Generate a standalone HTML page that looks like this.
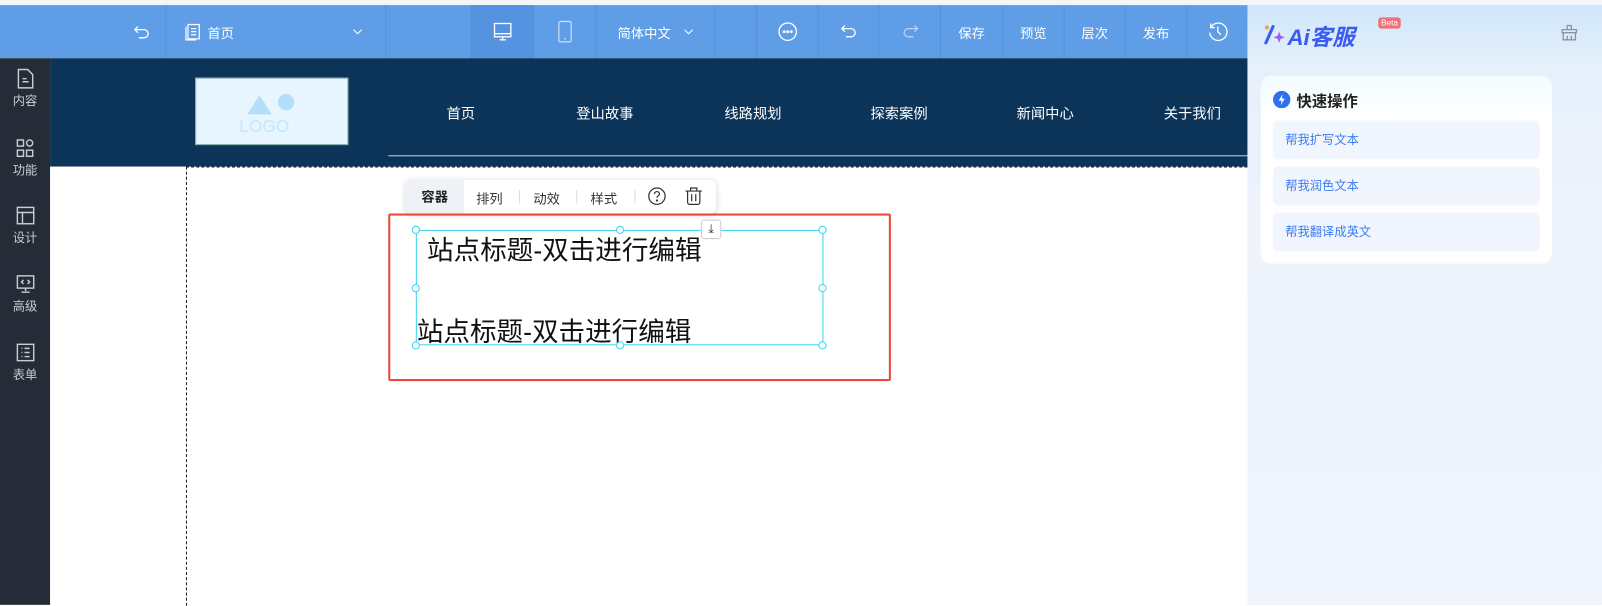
<!DOCTYPE html>
<html><head><meta charset="utf-8"><style>
*{margin:0;padding:0;box-sizing:border-box}
html,body{width:1602px;height:605px;overflow:hidden;background:#fff}
body{font-family:"Liberation Sans","Noto Sans CJK SC",sans-serif}
#w{position:absolute;left:0;top:0;width:1568px;height:592px;transform:scale(1.02168);transform-origin:0 0}
.abs{position:absolute}
.top{left:0;top:0;width:1568px;height:5px;background:#f4f5f9}
.tb{left:0;top:5px;width:1221px;height:52px;background:#5f9de7;color:#fff;font-size:13px}
.tb .c{position:absolute;top:0;height:52px;display:flex;align-items:center;justify-content:center;border-left:1px solid #5592dc}
.side{left:0;top:57px;width:49px;height:535px;background:#252c38;color:#c8ccd4;font-size:12px}
.side .it{position:absolute;left:0;width:49px;text-align:center}
.nav{left:49px;top:57px;width:1172px;height:106px;background:#0c3459}
.nav span{position:absolute;top:44px;color:#fff;font-size:14px}
.panel{left:1221px;top:5px;width:347px;height:587px;background:linear-gradient(180deg,#cfe6fb 0,#e6f0fb 60px,#eef3fc 200px,#f0f4fc 100%)}
.card{left:1234px;top:74px;width:285px;height:184px;background:linear-gradient(#f2fbff,#fff 40px);border-radius:10px}
.btn{position:absolute;left:12px;width:261px;height:38px;background:#f0f5fe;border-radius:5px;color:#3b7cf0;font-size:12px;line-height:38px;padding-left:12px}
.h{width:8px;height:8px;border:1px solid #37d6f0;border-radius:50%;background:#fff}
</style></head><body><div id="w">
<div class="abs top"></div>
<div class="abs tb">
 <div class="c" style="left:115px;width:47px;border:none"><svg width="20" height="20" viewBox="0 0 20 20" fill="none" stroke="#fff" stroke-width="1.3"><path d="M6 5L3 8l3 3M3 8h9a4 4 0 010 8H7"/></svg></div>
 <div class="c" style="left:162px;width:215px;justify-content:flex-start;padding-left:18px"><svg width="16" height="18" viewBox="0 0 16 18" fill="none" stroke="#fff" stroke-width="1.2"><rect x="3" y="2" width="11" height="14"/><path d="M1 4v13h10M6 6h5M6 9h5M6 12h5"/></svg><span style="margin-left:6px">首页</span><svg style="position:absolute;right:22px" width="10" height="6" viewBox="0 0 10 6" fill="none" stroke="#fff"><path d="M1 1l4 4 4-4"/></svg></div>
 <div class="c" style="left:377px;width:84px"></div>
 <div class="c" style="left:461px;width:61px;background:#5592df"><svg width="20" height="20" viewBox="0 0 20 20" fill="none" stroke="#fff" stroke-width="1.3"><rect x="2" y="2" width="16" height="13"/><path d="M2 12h16M10 15v3M7 18h6"/></svg></div>
 <div class="c" style="left:522px;width:61px"><svg width="14" height="22" viewBox="0 0 14 22" fill="none" stroke="#cfe0f7" stroke-width="1.2"><rect x="1" y="1" width="12" height="20" rx="1.5"/><path d="M6 18h2"/></svg></div>
 <div class="c" style="left:583px;width:116px;font-size:13px">简体中文<svg style="margin-left:12px" width="10" height="6" viewBox="0 0 10 6" fill="none" stroke="#fff"><path d="M1 1l4 4 4-4"/></svg></div>
 <div class="c" style="left:699px;width:41px"></div>
 <div class="c" style="left:740px;width:60px"><svg width="20" height="20" viewBox="0 0 20 20" fill="none" stroke="#fff" stroke-width="1.3"><circle cx="10" cy="10" r="8.5"/><circle cx="6.5" cy="10" r=".8" fill="#fff"/><circle cx="10" cy="10" r=".8" fill="#fff"/><circle cx="13.5" cy="10" r=".8" fill="#fff"/></svg></div>
 <div class="c" style="left:800px;width:60px"><svg width="20" height="20" viewBox="0 0 20 20" fill="none" stroke="#fff" stroke-width="1.3"><path d="M6 4L3 7l3 3M3 7h9a4 4 0 010 8H7"/></svg></div>
 <div class="c" style="left:860px;width:60px"><svg width="20" height="20" viewBox="0 0 20 20" fill="none" stroke="#b8d3f3" stroke-width="1.3"><path d="M14 4l3 3-3 3M17 7H8a4 4 0 000 8h5"/></svg></div>
 <div class="c" style="left:920px;width:61px">保存</div>
 <div class="c" style="left:981px;width:60px">预览</div>
 <div class="c" style="left:1041px;width:60px">层次</div>
 <div class="c" style="left:1101px;width:60px">发布</div>
 <div class="c" style="left:1161px;width:60px"><svg width="22" height="22" viewBox="0 0 22 22" fill="none" stroke="#fff" stroke-width="1.3"><path d="M4 7a8.5 8.5 0 11-1 5M4 3v4h4M11 6v5l3 3"/></svg></div>
</div>
<div class="abs side">
 <div class="it" style="top:10px"><svg width="18" height="20" viewBox="0 0 18 20" fill="none" stroke="#c8ccd4" stroke-width="1.4"><path d="M2 1h9l5 5v13H2z M6 10h4M6 13h6"/></svg><div>内容</div></div>
 <div class="it" style="top:78px"><svg width="20" height="20" viewBox="0 0 20 20" fill="none" stroke="#c8ccd4" stroke-width="1.4"><rect x="2" y="2" width="6" height="6"/><circle cx="14" cy="5" r="3"/><rect x="2" y="12" width="6" height="6"/><rect x="11" y="12" width="6" height="6"/></svg><div>功能</div></div>
 <div class="it" style="top:144px"><svg width="20" height="20" viewBox="0 0 20 20" fill="none" stroke="#c8ccd4" stroke-width="1.4"><rect x="2" y="2" width="16" height="16"/><path d="M2 7h16M7 7v11"/></svg><div>设计</div></div>
 <div class="it" style="top:211px"><svg width="20" height="20" viewBox="0 0 20 20" fill="none" stroke="#c8ccd4" stroke-width="1.4"><rect x="2" y="2" width="16" height="12"/><path d="M10 14v3M6 18h8M8 6l-2 2 2 2M12 6l2 2-2 2"/></svg><div>高级</div></div>
 <div class="it" style="top:278px"><svg width="20" height="20" viewBox="0 0 20 20" fill="none" stroke="#c8ccd4" stroke-width="1.4"><rect x="2" y="2" width="16" height="16"/><path d="M6 6h1M9 6h5M6 10h1M9 10h5M6 14h1M9 14h5"/></svg><div>表单</div></div>
</div>
<div class="abs nav">
 <div class="abs" style="left:142px;top:19px;width:150px;height:66px;background:#e6f5fe;border:1px solid #8aa">
  <svg class="abs" style="left:50px;top:14px" width="50" height="22"><polygon points="0,21 12,2 24,21" fill="#b4dffb"/><circle cx="38" cy="9" r="8" fill="#b4dffb"/></svg>
  <div class="abs" style="left:42px;top:37px;font-size:17px;color:#c6e6fb">LOGO</div>
 </div>
 <span style="left:388px">首页</span><span style="left:515px">登山故事</span><span style="left:660px">线路规划</span><span style="left:803px">探索案例</span><span style="left:946px">新闻中心</span><span style="left:1090px">关于我们</span>
 <div class="abs" style="left:331px;top:95px;width:841px;height:1px;background:#b9d3ec"></div>
</div>
<div class="abs" style="left:182px;top:163px;width:0;height:430px;border-left:1px dashed #222"></div>
<div class="abs" style="left:182px;top:163px;width:1039px;height:0;border-top:1px dashed #222"></div>
<div class="abs" style="left:397px;top:176px;width:304px;height:33px;background:#fff;border-radius:6px;box-shadow:0 1px 5px rgba(0,0,0,.18);font-size:13px;color:#333">
 <div class="abs" style="left:0;top:0;width:57px;height:33px;background:#eef1f6;border-radius:6px 0 0 6px;font-weight:bold;line-height:33px;text-align:center;color:#222">容器</div>
 <div class="abs" style="left:69px;top:8px">排列</div><div class="abs" style="left:111px;top:10px;width:1px;height:13px;background:#ddd"></div>
 <div class="abs" style="left:125px;top:8px">动效</div><div class="abs" style="left:167px;top:10px;width:1px;height:13px;background:#ddd"></div>
 <div class="abs" style="left:181px;top:8px">样式</div><div class="abs" style="left:224px;top:10px;width:1px;height:13px;background:#ddd"></div>
 <svg class="abs" style="left:237px;top:7px" width="18" height="18" viewBox="0 0 18 18" fill="none" stroke="#333" stroke-width="1.2"><circle cx="9" cy="9" r="8"/><path d="M6.5 7a2.5 2.5 0 115 0c0 1.5-2.5 2-2.5 3.5"/><circle cx="9" cy="13.3" r=".5" fill="#333"/></svg>
 <svg class="abs" style="left:273px;top:6px" width="18" height="19" viewBox="0 0 18 19" fill="none" stroke="#333" stroke-width="1.2"><path d="M1 5h16M6 5V2h6v3M3 5v11a2 2 0 002 2h8a2 2 0 002-2V5M7 8v7M11 8v7"/></svg>
</div>
<div class="abs" style="left:380px;top:209px;width:492px;height:164px;border:2px solid #ea4a3c;border-radius:2px"></div>
<div class="abs" style="left:407px;top:225px;width:399px;height:113px;border:1px solid #37d6f0"></div>
<div class="abs" style="left:686px;top:215px;width:20px;height:19px;background:#fff;border:1px solid #ccc;border-radius:3px;font-size:12px;text-align:center;line-height:17px;color:#333">⤓</div>
<div class="abs" style="left:418px;top:225px;font-size:26px;color:#111">站点标题-双击进行编辑</div>
<div class="abs" style="left:408px;top:305px;font-size:26px;color:#111">站点标题-双击进行编辑</div>
<div class="abs h" style="left:403px;top:221px"></div>
<div class="abs h" style="left:603px;top:221px"></div>
<div class="abs h" style="left:801px;top:221px"></div>
<div class="abs h" style="left:403px;top:278px"></div>
<div class="abs h" style="left:801px;top:278px"></div>
<div class="abs h" style="left:403px;top:334px"></div>
<div class="abs h" style="left:603px;top:334px"></div>
<div class="abs h" style="left:801px;top:334px"></div>
<div class="abs panel"></div>
<svg class="abs" style="left:1236px;top:22px" width="22" height="22" viewBox="0 0 22 22"><path d="M10 4L3 20" stroke="#3b5cf0" stroke-width="3" stroke-linecap="round"/><circle cx="4" cy="5" r="2" fill="#f59a5a"/><path d="M16 9l1.5 4 4 1.5-4 1.5-1.5 4-1.5-4-4-1.5 4-1.5z" fill="#a45cf0"/></svg>
<div class="abs" style="left:1260px;top:19px;font-size:22px;font-weight:bold;font-style:italic;color:#3b5cf0">Ai客服</div>
<div class="abs" style="left:1349px;top:17px;width:22px;height:11px;background:#f0707a;border-radius:3px;color:#fff;font-size:8px;text-align:center;line-height:11px">Beta</div>
<svg class="abs" style="left:1527px;top:23px" width="18" height="18" viewBox="0 0 18 18" fill="none" stroke="#8a93a6" stroke-width="1.3"><path d="M7 2h4v4H7zM2 6h14v3H2zM3 9v7h12V9M7 12v4M11 12v4"/></svg>
<div class="abs card">
 <svg class="abs" style="left:12px;top:15px" width="17" height="17" viewBox="0 0 17 17"><circle cx="8.5" cy="8.5" r="8.5" fill="#2f6ff0"/><path d="M9.5 3L5.5 9.5h3L7.5 14l4-6.5h-3z" fill="#fff"/></svg>
 <div class="abs" style="left:35px;top:14px;font-size:15px;font-weight:bold;color:#222">快速操作</div>
 <div class="btn" style="top:44px">帮我扩写文本</div>
 <div class="btn" style="top:89px">帮我润色文本</div>
 <div class="btn" style="top:134px">帮我翻译成英文</div>
</div>
</div></body></html>
